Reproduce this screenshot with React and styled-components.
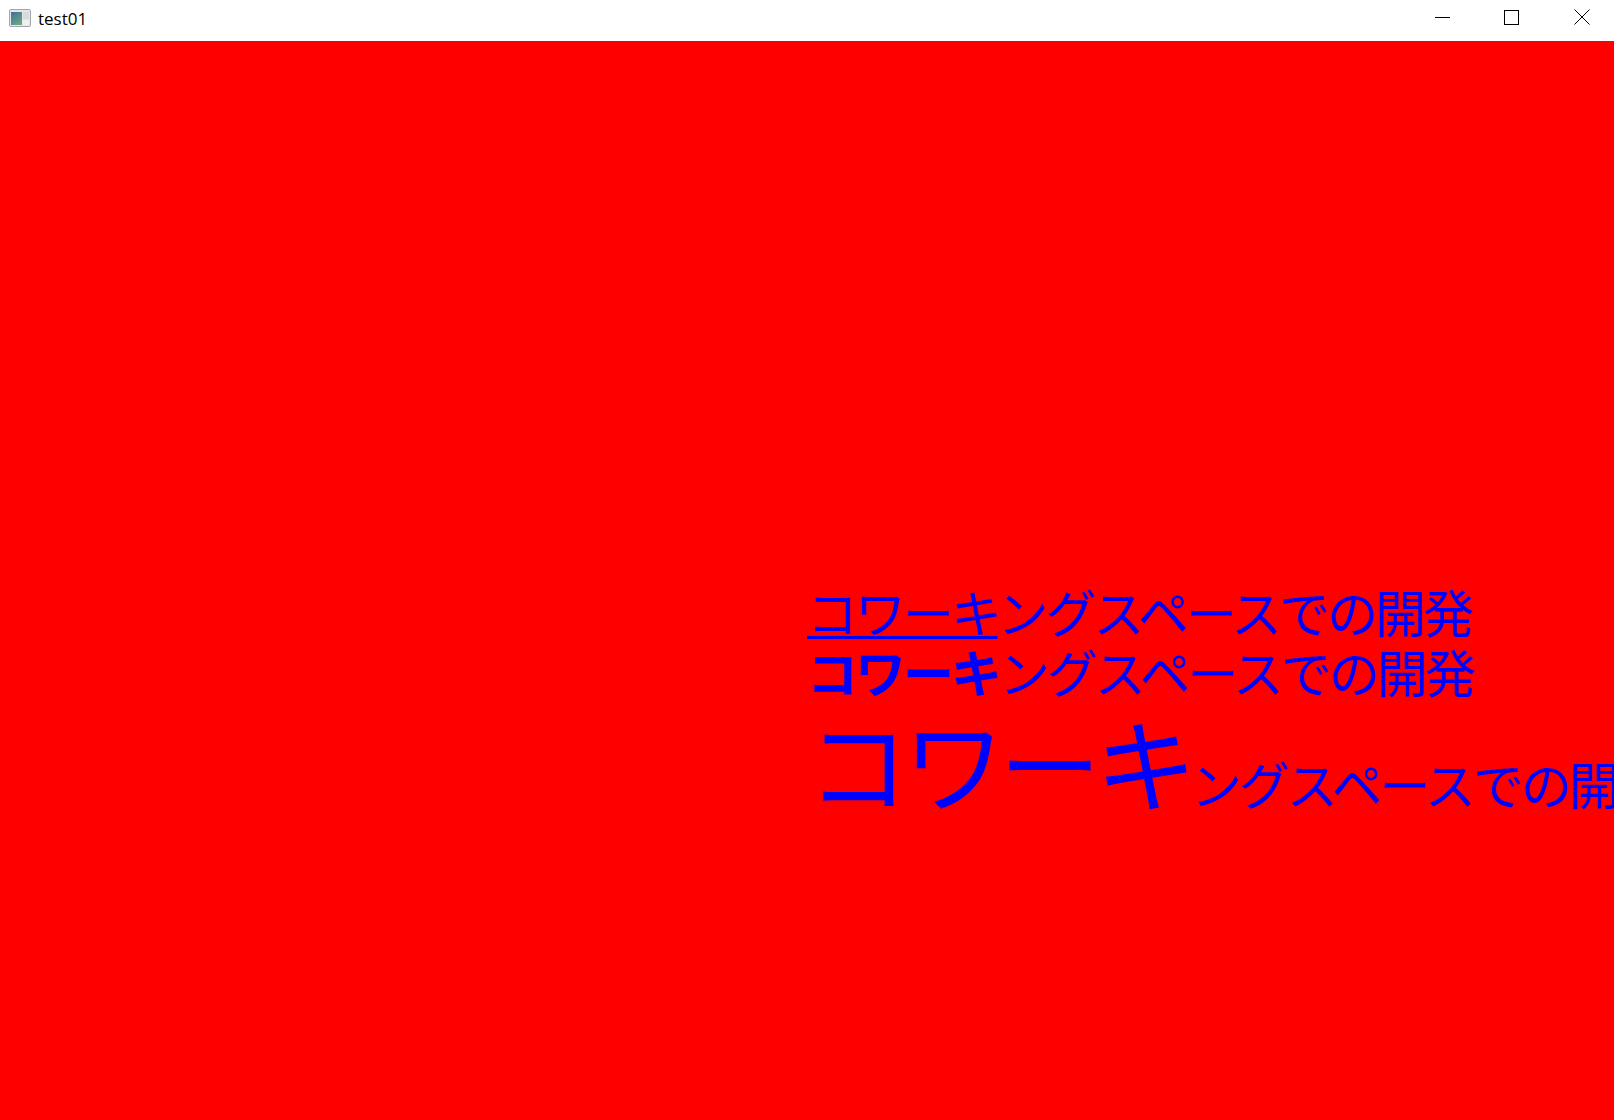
import React from "react";
import styled, { createGlobalStyle } from "styled-components";

const Global = createGlobalStyle`
  html, body { margin: 0; padding: 0; height: 100%; overflow: hidden; background: #f00; }
  #root { height: 100%; }
`;
const Window = styled.div`
  width: 1614px; height: 1120px; display: flex; flex-direction: column; overflow: hidden;
`;
const TitleBar = styled.header`
  height: 41px; flex: none; background: #fff; display: flex; align-items: center; color: #000;
`;
const AppIcon = styled.svg`
  width: 24px; height: 20px; margin: 0 6px 3px 9px; flex: none;
`;
const Title = styled.span`
  font-size: 17px; line-height: 20px; flex: 1; margin-top: -3px; margin-left: -1px;
  font-family: "Open Sans", "Liberation Sans", sans-serif;
`;
const Controls = styled.div`
  display: flex; height: 100%; margin-right: -3px;
`;
const Control = styled.button`
  width: 70px; height: 100%; padding: 0 ${(p) => p.$nudge || 0}px 7px 0; border: 0; background: none;
  display: flex; align-items: center; justify-content: center;
`;
const Canvas = styled.main`
  flex: 1; min-height: 0; background: #f00; display: grid;
  grid-template-columns: 807px 807px; grid-template-rows: 540px 1fr; overflow: hidden;
`;
const TextBlock = styled.div`
  grid-column: 2; grid-row: 2; white-space: nowrap; color: #00f;
  font-family: "Noto Sans CJK JP", sans-serif; font-weight: 400; font-size: 51px; letter-spacing: -3px;
`;
const Line = styled.div`
  height: ${(p) => p.$height}px; line-height: ${(p) => p.$height}px;
`;
const Under = styled.span`
  text-decoration: underline; text-decoration-thickness: 2.5px; text-underline-offset: 3px;
`;
const Bold = styled.span`font-weight: 700;`;
const Big = styled.span`font-size: 102px; letter-spacing: -6px;`;

const RUN = "ングスペースでの開発";

export default function App() {
  return (
    <Window>
      <Global />
      <TitleBar>
        <AppIcon viewBox="0 0 24 20">
          <defs>
            <linearGradient id="g" x1="0" y1="0" x2="0.6" y2="1">
              <stop offset="0" stopColor="#3f6f9e" />
              <stop offset="1" stopColor="#6aa583" />
            </linearGradient>
          </defs>
          <rect x="0.5" y="0.5" width="21" height="17" rx="1.5" fill="#e4e6e8" stroke="#a3a7ad" />
          <rect x="2" y="3" width="11" height="13" fill="url(#g)" />
          <rect x="14" y="3" width="6" height="7" fill="#d5dbde" />
          <rect x="14" y="11" width="6" height="5" fill="#f0f0f0" />
        </AppIcon>
        <Title>test01</Title>
        <Controls>
          <Control aria-label="minimize">
            <svg width="15" height="15" viewBox="0 0 15 15"><path d="M0 7.5H15" stroke="#000" strokeWidth="1" /></svg>
          </Control>
          <Control aria-label="maximize" $nudge={2}>
            <svg width="15" height="15" viewBox="0 0 15 15"><rect x="0.5" y="0.5" width="14" height="14" fill="none" stroke="#000" /></svg>
          </Control>
          <Control aria-label="close">
            <svg width="16" height="16" viewBox="0 0 16 16"><path d="M0.5 0.5L15.5 15.5M15.5 0.5L0.5 15.5" stroke="#000" /></svg>
          </Control>
        </Controls>
      </TitleBar>
      <Canvas>
        <TextBlock>
          <Line $height={60}><Under>コワーキ</Under>{RUN}</Line>
          <Line $height={60}><Bold>コワーキ</Bold>{RUN}</Line>
          <Line $height={120}><Big>コワーキ</Big>{RUN}</Line>
        </TextBlock>
      </Canvas>
    </Window>
  );
}
